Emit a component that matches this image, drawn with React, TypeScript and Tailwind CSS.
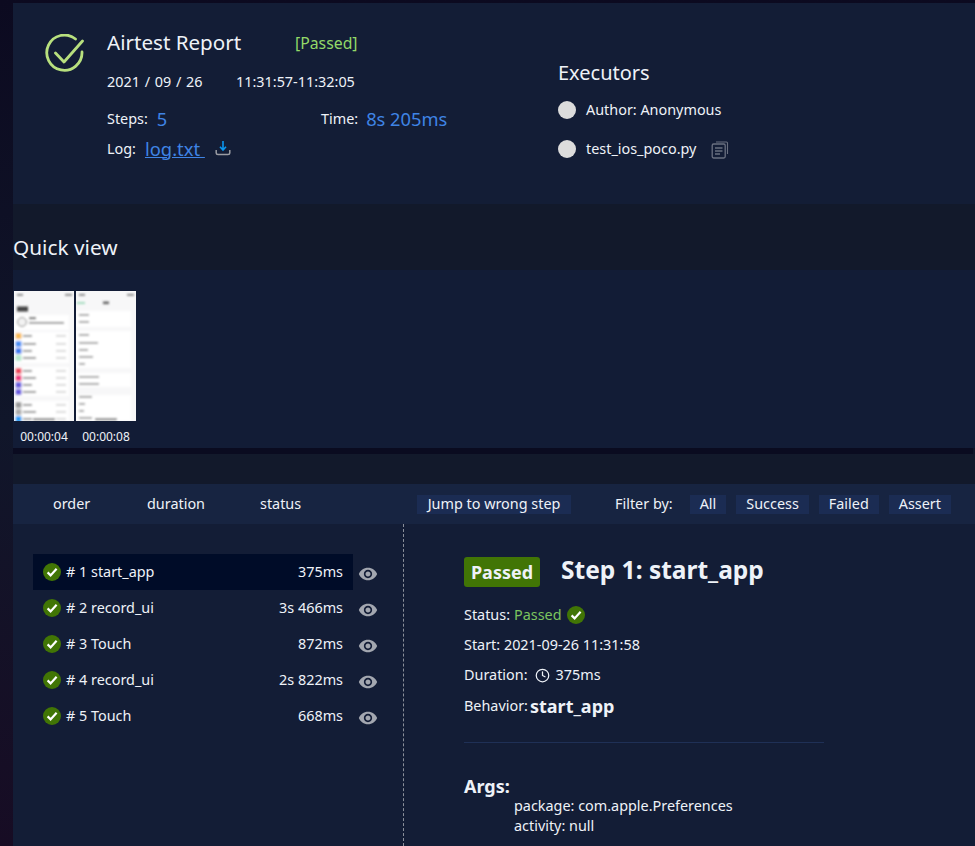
import { Clock } from "lucide-react";
import { MdVisibility } from "react-icons/md";

const Check = ({ s = 18 }: { s?: number }) => (
  <svg width={s} height={s} viewBox="0 0 18 18" className="shrink-0">
    <circle cx="9" cy="9" r="9" fill="#417505" />
    <path d="M4.6 9.4 L7.6 12.4 L13.6 5.8" fill="none" stroke="#fff" strokeWidth="2.2" />
  </svg>
);

const Thumb1 = () => {
  const groups = [
    { y: 41, h: 31, rows: [[45, "#f7b955"], [53, "#4a90f5"], [60, "#3b7cf0"], [67, "#b5e8cc"]] },
    { y: 76, h: 29, rows: [[80, "#f0455a"], [87, "#f0397f"], [94, "#6a5be0"], [101, "#6a5be0"]] },
    { y: 110, h: 20, rows: [[114, "#9a9a9a"], [121, "#aaaaaa"], [128, "#2a9df5"]] },
  ] as const;
  return (
    <svg width="60" height="130" viewBox="0 0 60 130" className="block">
      <defs>
        <filter id="b1"><feGaussianBlur stdDeviation="0.8" /></filter>
      </defs>
      <rect width="60" height="130" fill="#f7f7f8" />
      <g filter="url(#b1)">
        <rect x="3" y="3" width="6" height="1.6" fill="#777" />
        <rect x="51" y="3" width="7" height="1.6" fill="#777" />
        <rect x="3" y="15.5" width="11" height="5" fill="#444" />
        <rect y="24" width="55" height="15" fill="#fff" />
        <circle cx="8" cy="31" r="4.5" fill="#f2f2f2" stroke="#888" strokeWidth="1" />
        <rect x="15" y="26" width="7" height="2.2" fill="#666" />
        <rect x="15" y="31" width="35" height="1.6" fill="#777" />
        {groups.map((g) => (
          <g key={g.y}>
            <rect y={g.y} width="55" height={g.h} fill="#fff" />
            {g.rows.map(([y, c], i) => (
              <g key={y}>
                <rect x="1.5" y={y - 3} width="6" height="6" rx="1" fill={c} />
                <rect x="9" y={y - 1} width={i % 2 ? 13 : 9} height="1.8" fill="#888" />
                <rect x="42" y={y - 0.8} width="10" height="1.4" fill="#ccc" />
              </g>
            ))}
          </g>
        ))}
        <rect x="19" y="127.5" width="22" height="1.6" fill="#444" />
      </g>
    </svg>
  );
};

const Thumb2 = () => {
  const groups = [
    { y: 20, h: 16, rows: [[24, 10], [31, 10]] },
    { y: 40, h: 37, rows: [[44, 10], [52, 19], [59, 9], [66, 14], [73, 6]] },
    { y: 82, h: 14, rows: [[86, 20], [93, 20]] },
    { y: 104, h: 26, rows: [[106, 13], [113, 6], [120, 5], [127, 13]] },
  ] as const;
  return (
    <svg width="60" height="130" viewBox="0 0 60 130" className="block">
      <defs>
        <filter id="b2"><feGaussianBlur stdDeviation="0.8" /></filter>
      </defs>
      <rect width="60" height="130" fill="#f7f7f8" />
      <g filter="url(#b2)">
        <rect x="3" y="3" width="6" height="1.6" fill="#777" />
        <rect x="51" y="3" width="7" height="1.6" fill="#777" />
        <rect x="1" y="11" width="8" height="2" fill="#a5dcc0" />
        <rect x="27" y="10.5" width="6" height="2.6" fill="#666" />
        {groups.map((g) => (
          <g key={g.y}>
            <rect y={g.y} width="55" height={g.h} fill="#fff" />
            {g.rows.map(([y, w]) => (
              <rect key={y} x="3" y={y - 1} width={w} height="1.8" fill="#999" />
            ))}
          </g>
        ))}
        <rect x="19" y="127.5" width="22" height="1.6" fill="#444" />
      </g>
    </svg>
  );
};

const steps = [
  ["# 1 start_app", "375ms"],
  ["# 2 record_ui", "3s 466ms"],
  ["# 3 Touch", "872ms"],
  ["# 4 record_ui", "2s 822ms"],
  ["# 5 Touch", "668ms"],
];

export default function App() {
  return (
    <div
      className="h-[846px] overflow-hidden pt-[3px] pl-[13px] text-[14.4px] text-[#eef2f8] bg-gradient-to-b from-[#0c0a20] via-[#10162a] to-[#170c24]"
      style={{ fontFamily: '"Noto Sans", "Noto Sans CJK SC", sans-serif' }}
    >
      {/* summary */}
      <section className="h-[201px] bg-[#131d36] flex">
        <div className="w-[545px] shrink-0 flex pl-[32px] pt-[31px]">
          <svg width="39" height="39" viewBox="0 0 39 39" className="shrink-0">
            <path d="M30.5 5 A17.6 17.6 0 1 0 37 18" fill="none" stroke="#b8e07e" strokeWidth="2.8" strokeLinecap="round" />
            <path d="M10.5 19 L19 28 L37.5 7" fill="none" stroke="#b8e07e" strokeWidth="2.8" strokeLinecap="round" strokeLinejoin="round" />
          </svg>
          <div className="ml-[23px] flex-1">
            <div className="flex items-center h-[20px]">
              <span className="text-[20.6px] leading-[20px] w-[188px] pb-[4px]">Airtest Report</span>
              <span className="text-[15.8px] text-[#92d968]">[Passed]</span>
            </div>
            <div className="flex mt-[18px] h-[20px] items-center pb-[1px]">
              <span className="w-[129px] [word-spacing:1px]">2021 / 09 / 26</span>
              <span>11:31:57-11:32:05</span>
            </div>
            <div className="flex mt-[15px] h-[24px] items-center pb-[1px]">
              <div className="w-[214px] flex items-center gap-[9px]">
                <span>Steps:</span>
                <span className="text-[18.3px] text-[#3f84e5]">5</span>
              </div>
              <div className="flex items-center gap-[8px]">
                <span>Time:</span>
                <span className="text-[18.3px] text-[#3f84e5]">8s 205ms</span>
              </div>
            </div>
            <div className="flex mt-[6px] h-[24px] items-center pb-[1px]">
              <span>Log:</span>
              <a className="ml-[9px] text-[18.4px] text-[#3f84e5] underline whitespace-pre">log.txt </a>
              <svg width="16" height="16" viewBox="0 0 16 16" className="ml-[10px] -mt-[2px]">
                <path d="M8 1 V9.5 M5 6.8 L8 10 L11 6.8" fill="none" stroke="#0a96f0" strokeWidth="1.6" />
                <path d="M1.2 10 V13 Q1.2 14.5 3 14.5 H13 Q14.8 14.5 14.8 13 V10" fill="none" stroke="#9a9ca3" strokeWidth="1.5" />
              </svg>
            </div>
          </div>
        </div>
        <div className="pt-[56px]">
          <div className="text-[20px] leading-[28px]">Executors</div>
          <div className="flex items-center h-[20px] mt-[13px]">
            <span className="w-[18px] h-[18px] rounded-full bg-[#dcdcdc]" />
            <span className="ml-[10px] pb-[1px]">Author: Anonymous</span>
          </div>
          <div className="flex items-center h-[20px] mt-[19px]">
            <span className="w-[18px] h-[18px] rounded-full bg-[#dcdcdc]" />
            <span className="ml-[10px]">test_ios_poco.py</span>
            <svg width="18" height="18" viewBox="0 0 18 18" className="ml-[15px] mt-[1px]">
              <path d="M5 1 H15.5 Q16.5 1 16.5 2 V13" fill="none" stroke="#6a7080" strokeWidth="1.1" />
              <rect x="1.2" y="3" width="13" height="14" rx="1.4" fill="#131d36" stroke="#6a7080" strokeWidth="1.3" />
              <path d="M4 7 H11.5 M4 10 H11.5 M4 13 H9" stroke="#6a7080" strokeWidth="1.3" />
            </svg>
          </div>
        </div>
      </section>

      {/* quick view */}
      <h2 className="h-[66px] flex items-center text-[20.8px] pt-[22px] bg-[#12192b]">Quick view</h2>
      <section className="h-[178px] bg-[#121c36] pt-[21px] pl-px">
        <div className="flex gap-[2px]">
          <div className="w-[60px]">
            <Thumb1 />
            <div className="text-[12px] leading-[16px] mt-[8px] text-center whitespace-nowrap">00:00:04</div>
          </div>
          <div className="w-[60px]">
            <Thumb2 />
            <div className="text-[12px] leading-[16px] mt-[8px] text-center whitespace-nowrap">00:00:08</div>
          </div>
        </div>
      </section>
      <div className="h-[6px] mr-[2px] bg-[#0a0b20]" />
      <div className="h-[30px] bg-[#12192b]" />

      {/* steps */}
      <section className="bg-[#131d36] h-[362px]">
        <div className="h-[40px] bg-[#172441] flex items-center">
          <span className="ml-[40px] w-[94px] pb-[1px]">order</span>
          <span className="w-[113px] pb-[1px]">duration</span>
          <span className="w-[157px] pb-[1px]">status</span>
          <span className="w-[154px] justify-center h-[19px] flex items-center bg-[#1b2c53] pb-[1px]">Jump to wrong step</span>
          <span className="ml-[44px] mr-[17px] pb-[1px]">Filter by:</span>
          <div className="flex gap-[10px]">
            {["All", "Success", "Failed", "Assert"].map((f) => (
              <span key={f} className="px-[10px] h-[19px] flex items-center bg-[#1b2c53] pb-[1px]">{f}</span>
            ))}
          </div>
        </div>
        <div className="flex">
          <div className="w-[391px] shrink-0 h-[322px] border-r border-dashed border-[#8a8f9a] pt-[30px] pl-[20px]">
            {steps.map(([name, time], i) => (
              <div key={name} className="flex items-center h-[36px]">
                <div className={`w-[320px] h-[36px] flex items-center pl-[10px] pr-[10px] ${i === 0 ? "bg-[#000c28]" : ""}`}>
                  <Check />
                  <span className="ml-[5px] flex-1 pb-[1px]">{name}</span>
                  <span className="pb-[1px]">{time}</span>
                </div>
                <MdVisibility size={20} className="ml-[5px] mt-[4px] text-[#a3a7b0]" />
              </div>
            ))}
          </div>
          <div className="pl-[60px] pt-[33px] flex-1">
            <div className="flex items-center h-[30px]">
              <span className="w-[76px] h-[30px] rounded-[3px] bg-[#417505] flex items-center justify-center text-[18px] font-bold">Passed</span>
              <span className="ml-[21px] text-[24.5px] font-bold pb-[4px]">Step 1: start_app</span>
            </div>
            <div className="flex items-center mt-[18px] h-[20px] gap-[5px]">
              <span className="pb-[1px]">Status:</span>
              <span className="text-[#7cc45f] -ml-[1px] pb-[1px]">Passed</span>
              <Check />
            </div>
            <div className="mt-[10px] h-[20px] flex items-center pb-[1px]">Start: 2021-09-26 11:31:58</div>
            <div className="mt-[10px] h-[20px] flex items-center pb-[1px]">
              <span>Duration:</span>
              <Clock size={15} className="ml-[7px] mr-[6px] mt-[2px]" />
              <span>375ms</span>
            </div>
            <div className="mt-[10px] h-[22px] flex items-center gap-[2px]">
              <span>Behavior:</span>
              <span className="text-[18px] font-bold">start_app</span>
            </div>
            <div className="w-[360px] h-px bg-[#1f3056] mt-[25px]" />
            <div className="mt-[31px] text-[18px] leading-[24px] font-bold">Args:</div>
            <div className="pl-[50px] leading-[20px] mt-[-2px]">
              <div>package: com.apple.Preferences</div>
              <div>activity: null</div>
            </div>
          </div>
        </div>
      </section>
    </div>
  );
}
